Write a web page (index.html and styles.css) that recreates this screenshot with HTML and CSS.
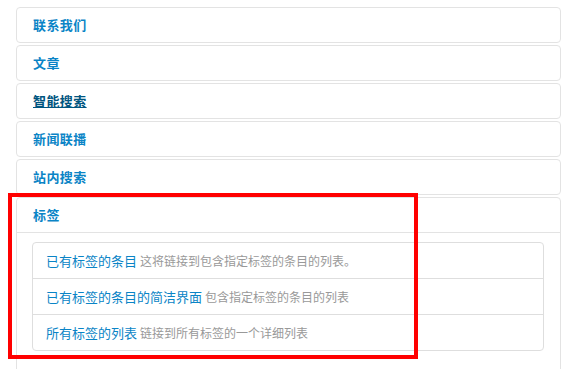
FILE: index.html
```html
<!DOCTYPE html>
<html>
  <head>
    <meta charset="utf-8">
    <link rel="stylesheet" href="styles.css">
  </head>
  <body>
    <div class="panels">
      <div class="panel"><div class="panel-heading"><a href="#">联系我们</a></div></div>
      <div class="panel"><div class="panel-heading"><a href="#">文章</a></div></div>
      <div class="panel"><div class="panel-heading"><a href="#" class="hover">智能搜索</a></div></div>
      <div class="panel"><div class="panel-heading"><a href="#">新闻联播</a></div></div>
      <div class="panel"><div class="panel-heading"><a href="#">站内搜索</a></div></div>
      <div class="panel open">
        <div class="panel-heading"><a href="#">标签</a></div>
        <div class="panel-body">
          <ul class="list-group">
            <li class="list-item"><a href="#">已有标签的条目</a> <span class="desc">这将链接到包含指定标签的条目的列表。</span></li>
            <li class="list-item"><a href="#">已有标签的条目的简洁界面</a> <span class="desc">包含指定标签的条目的列表</span></li>
            <li class="list-item"><a href="#">所有标签的列表</a> <span class="desc">链接到所有标签的一个详细列表</span></li>
          </ul>
        </div>
      </div>
    </div>
    <div class="highlight"></div>
  </body>
</html>
```

FILE: styles.css
```css
* { box-sizing: border-box; }
body {
  font: 13px "Noto Sans CJK SC", "Liberation Sans", sans-serif;
  margin: 7px 15px 0 16px;
  background: #fff;
  overflow: hidden;
}
a {
  color: #0a84c6;
  text-decoration: none;
}
.panel {
  border: 1px solid #e3e3e3;
  border-radius: 4px;
  margin-bottom: 2px;
}
.panel-heading {
  height: 34px;
  line-height: 34px;
  padding: 0 16px;
}
.panel-heading a {
  font-weight: bold;
  letter-spacing: 0.4px;
}
.panel-heading a.hover {
  color: #005580;
  text-decoration: underline;
}
.open {
  border-radius: 4px 4px 0 0;
}
.open .panel-heading {
  height: 35px;
  border-bottom: 1px solid #e3e3e3;
}
.panel-body {
  padding: 9px 16px 20px 15px;
}
.list-group {
  list-style: none;
  margin: 0;
  padding: 0;
  border: 1px solid #dedede;
  border-radius: 4px;
}
.list-item {
  height: 36px;
  line-height: 35px;
  padding: 0 13px;
  border-top: 1px solid #dedede;
  white-space: nowrap;
}
.list-item:first-child {
  height: 35px;
  border-top: none;
}
.desc {
  font-size: 12px;
  color: #999;
}
.highlight {
  position: absolute;
  left: 8px;
  top: 193px;
  width: 410px;
  height: 166px;
  border: 4px solid #f00;
}
```
